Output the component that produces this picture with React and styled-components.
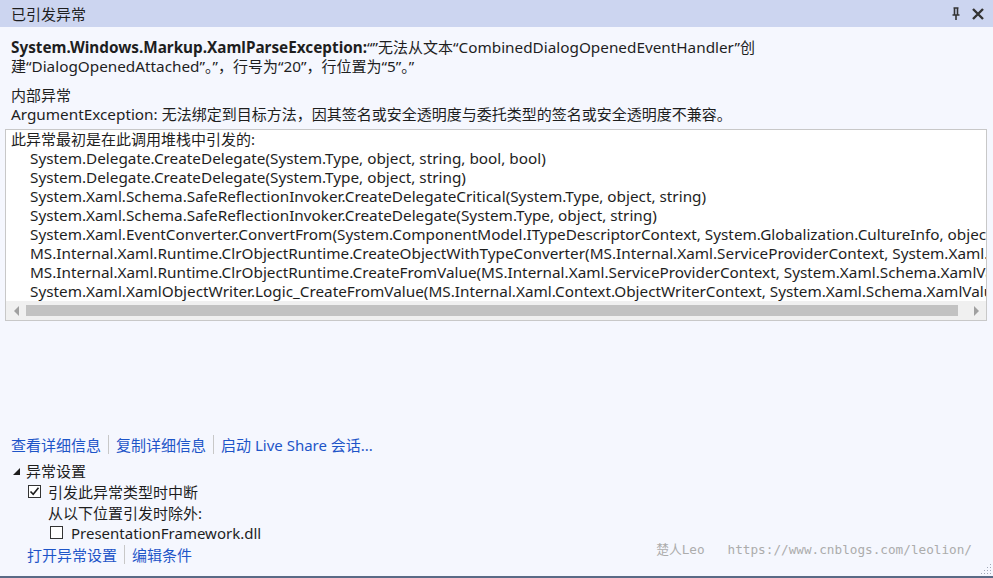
import styled, {createGlobalStyle} from 'styled-components'

const Global = createGlobalStyle`
	html, body {
		margin: 0;
		padding: 0;
		background: #f5f7fe;
	}
	body {
		font-family: "Noto Sans", "Noto Sans CJK SC", sans-serif;
		font-size: 15.3px;
		color: #1e1e1e;
	}
`

const Window = styled.div`
	width: 993px;
	height: 578px;
	display: flex;
	flex-direction: column;
	background: #f5f7fe;
	border-bottom: 2px solid #5a6a86;
	box-sizing: border-box;
	position: relative;
	overflow: hidden;
`

const TitleBar = styled.div`
	height: 27px;
	flex: none;
	background: #ccd5f0;
	display: flex;
	align-items: center;
	padding: 0 4px 0 11px;
	font-size: 15px;
	color: #1e1e1e;
`

const Title = styled.div`
	flex: 1;
`

const TitleButton = styled.span`
	width: 22px;
	height: 22px;
	display: flex;
	align-items: center;
	justify-content: center;
`

const Body = styled.div`
	flex: 1;
	display: flex;
	flex-direction: column;
	padding: 11px 6px 12px 5px;
`

const Message = styled.div`
	padding-left: 6px;
	line-height: 19px;
	margin-bottom: ${p => p.$gap}px;
`

const Zh = styled.span`
	font-size: 15px;
`

const Bold = styled.b`
	font-weight: 700;
`

const StackBox = styled.div`
	border: 1px solid #c8c8c8;
	background: #fff;
	display: flex;
	flex-direction: column;
`

const StackLines = styled.div`
	height: 171px;
	overflow: hidden;
	white-space: nowrap;
	line-height: 19px;
`

const StackLine = styled.div`
	padding-left: ${p => p.$indent ? 24 : 5}px;
`

const HScroll = styled.div`
	height: 19px;
	background: #f0f0f0;
	display: flex;
	align-items: center;
`

const Arrow = styled.span`
	width: 20px;
	display: flex;
	justify-content: center;
	&::before {
		content: '';
		border-top: 5px solid transparent;
		border-bottom: 5px solid transparent;
		${p => p.$dir === 'left'
			? 'border-right: 5px solid #a0a0a0;'
			: 'border-left: 5px solid #a0a0a0;'}
	}
`

const Thumb = styled.div`
	flex: 1;
	height: 11px;
	background: #c2c2c2;
	margin-right: 8px;
`

const Spacer = styled.div`
	flex: 1;
`

const LinkRow = styled.div`
	display: flex;
	align-items: center;
	padding-left: ${p => p.$indent}px;
	height: 19px;
	font-size: 15px;
	margin-bottom: ${p => p.$gap || 0}px;
`

const Link = styled.span`
	color: #1e55c8;
`

const Sep = styled.span`
	width: 1px;
	height: 19px;
	background: #c8c8c8;
	margin: 0 7px;
`

const Section = styled.div`
	display: flex;
	flex-direction: column;
	font-size: 15px;
	margin-bottom: 3px;
`

const Row = styled.div`
	display: flex;
	align-items: center;
	padding-left: ${p => p.$indent}px;
	gap: ${p => p.$gap || 0}px;
	height: ${p => p.$h || 21}px;
`

const Triangle = styled.span`
	width: 0;
	height: 0;
	border-left: 7px solid transparent;
	border-bottom: 7px solid #1e1e1e;
	margin-right: 6px;
	margin-top: 2px;
`

const Box = styled.span`
	width: 13px;
	height: 13px;
	border: 1px solid #333;
	background: #fff;
	box-sizing: border-box;
	display: flex;
	align-items: center;
	justify-content: center;
`

const Watermark = styled.div`
	position: absolute;
	right: 21px;
	bottom: 18px;
	font-family: "DejaVu Sans Mono", "Noto Sans CJK SC", monospace;
	font-size: 12.7px;
	color: #acacac;
	white-space: pre;
`

const Grip = styled.svg`
	position: absolute;
	right: 1px;
	bottom: 1px;
`

const stack = [
	'System.Delegate.CreateDelegate(System.Type, object, string, bool, bool)',
	'System.Delegate.CreateDelegate(System.Type, object, string)',
	'System.Xaml.Schema.SafeReflectionInvoker.CreateDelegateCritical(System.Type, object, string)',
	'System.Xaml.Schema.SafeReflectionInvoker.CreateDelegate(System.Type, object, string)',
	'System.Xaml.EventConverter.ConvertFrom(System.ComponentModel.ITypeDescriptorContext, System.Globalization.CultureInfo, object)',
	'MS.Internal.Xaml.Runtime.ClrObjectRuntime.CreateObjectWithTypeConverter(MS.Internal.Xaml.ServiceProviderContext, System.Xaml.Schema.XamlValueConverter)',
	'MS.Internal.Xaml.Runtime.ClrObjectRuntime.CreateFromValue(MS.Internal.Xaml.ServiceProviderContext, System.Xaml.Schema.XamlValueConverter)',
	'System.Xaml.XamlObjectWriter.Logic_CreateFromValue(MS.Internal.Xaml.Context.ObjectWriterContext, System.Xaml.Schema.XamlValueConverter)',
]

const Check = () => (
	<svg width="11" height="11" viewBox="0 0 11 11">
		<path d="M1.5 5.5 L4.2 8.3 L9.5 1.8" fill="none" stroke="#1e1e1e" strokeWidth="1.6"/>
	</svg>
)

const App = () => {
	return (
		<Window>
			<Global/>
			<TitleBar>
				<Title>已引发异常</Title>
				<TitleButton>
					<svg width="12" height="14" viewBox="0 0 12 14">
						<path d="M3.5 1 H8.5 M4.5 1 V8 M7.5 1 V8 M2.5 8 H9.5 M6 8 V13" fill="none" stroke="#333" strokeWidth="1.6"/>
					</svg>
				</TitleButton>
				<TitleButton>
					<svg width="14" height="14" viewBox="0 0 14 14">
						<path d="M2 2 L12 12 M12 2 L2 12" fill="none" stroke="#333" strokeWidth="2.4"/>
					</svg>
				</TitleButton>
			</TitleBar>
			<Body>
				<Message $gap={10}>
					<Bold>System.Windows.Markup.XamlParseException:</Bold>“”<Zh>无法从文本</Zh>“CombinedDialogOpenedEventHandler”<Zh>创</Zh><br/>
					<Zh>建</Zh>“DialogOpenedAttached”<Zh>。”，行号为</Zh>“20”<Zh>，行位置为</Zh>“5”<Zh>。”</Zh>
				</Message>
				<Message $gap={5}>
					<Zh>内部异常</Zh><br/>
					ArgumentException: <Zh>无法绑定到目标方法，因其签名或安全透明度与委托类型的签名或安全透明度不兼容。</Zh>
				</Message>
				<StackBox>
					<StackLines>
						<StackLine><Zh>此异常最初是在此调用堆栈中引发的:</Zh></StackLine>
						{stack.map(line => <StackLine $indent key={line}>{line}</StackLine>)}
					</StackLines>
					<HScroll>
						<Arrow $dir="left"/>
						<Thumb/>
						<Arrow $dir="right"/>
					</HScroll>
				</StackBox>
				<Spacer/>
				<LinkRow $indent={6} $gap={6}>
					<Link>查看详细信息</Link>
					<Sep/>
					<Link>复制详细信息</Link>
					<Sep/>
					<Link>启动 Live Share 会话...</Link>
				</LinkRow>
				<Section>
					<Row $indent={8}>
						<Triangle/>
						<span>异常设置</span>
					</Row>
					<Row $indent={23} $gap={7}>
						<Box><Check/></Box>
						<span>引发此异常类型时中断</span>
					</Row>
					<Row $indent={43}>从以下位置引发时除外:</Row>
					<Row $indent={45} $gap={8} $h={19}>
						<Box/>
						<span>PresentationFramework.dll</span>
					</Row>
				</Section>
				<LinkRow $indent={22}>
					<Link>打开异常设置</Link>
					<Sep/>
					<Link>编辑条件</Link>
				</LinkRow>
			</Body>
			<Watermark>楚人Leo   https://www.cnblogs.com/leolion/</Watermark>
			<Grip width="12" height="12" viewBox="0 0 12 12">
				{[[10, 2], [10, 5], [7, 5], [10, 8], [7, 8], [4, 8], [10, 11], [7, 11], [4, 11], [1, 11]].map(([x, y]) => (
					<rect key={x + '-' + y} x={x} y={y - 1} width="1" height="1" fill="#a0a8b8"/>
				))}
			</Grip>
		</Window>
	)
}

export default App
